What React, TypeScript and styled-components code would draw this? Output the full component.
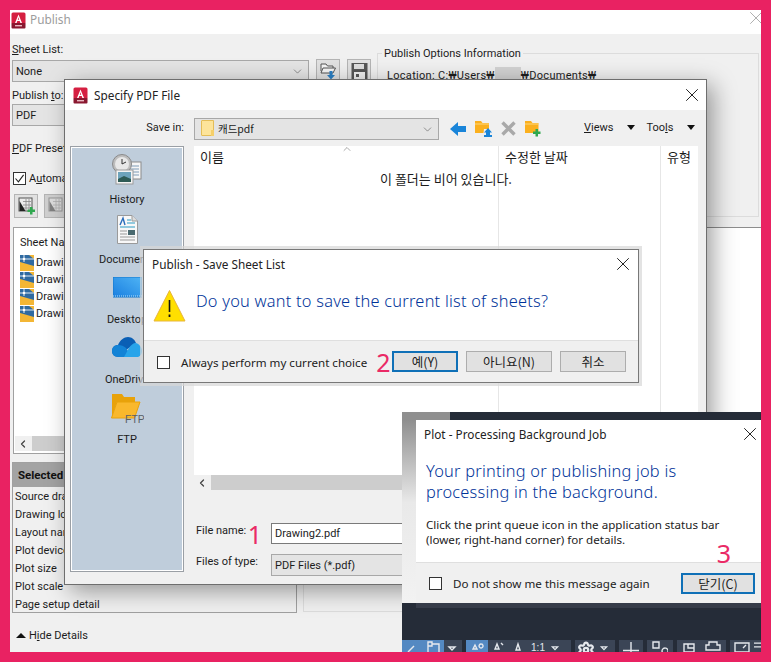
import React from 'react';
import styled, { createGlobalStyle } from 'styled-components';
import { X, ChevronDown, ChevronUp, ChevronLeft, Settings } from 'lucide-react';

const UI_FONT = `Roboto, "Noto Sans CJK KR", sans-serif`;
const DIALOG_FONT = `"Noto Sans", "Noto Sans CJK KR", sans-serif`;
const KOREAN_FONT = `"Noto Sans CJK KR", sans-serif`;

const GlobalStyle = createGlobalStyle`
  html, body {
    margin: 0;
    padding: 0;
    background: #e92262;
  }
  * {
    box-sizing: border-box;
  }
`;

const Frame = styled.div`
  width: 771px;
  height: 662px;
  padding: 10px;
  background: #e92262;
  font-family: ${UI_FONT};
  font-size: 11px;
  color: #1c1c1c;
  overflow: hidden;
`;

const Desktop = styled.div`
  position: relative;
  width: 751px;
  height: 642px;
  overflow: hidden;
  background: #f0f0f0;
`;

/* Windows sit on a free canvas */
const PublishWindow = styled.div`
  position: absolute;
  left: 0;
  top: 0;
  width: 751px;
  height: 642px;
  display: flex;
  flex-direction: column;
  background: #f0f0f0;
`;

const PublishTitle = styled.div`
  height: 24px;
  flex: none;
  background: #fff;
  display: flex;
  align-items: flex-start;
  justify-content: space-between;
  padding: 1px 0 0 1px;
  font-family: ${DIALOG_FONT};
  font-size: 11.8px;
  color: #9c9c9c;
`;

const TitleLeft = styled.div<{ $gap: number }>`
  display: flex;
  align-items: center;
  gap: ${({ $gap }) => $gap}px;
`;

const PublishName = styled.span`
  margin-bottom: 3px;
`;

const FadedClose = styled.div`
  display: flex;
  margin: -4px -6px 0 0;
  color: #a8a8a8;
`;

const TopArea = styled.div`
  display: flex;
  height: 193px;
  flex: none;
  padding: 7px 2px 0 2px;
`;

const SheetColumn = styled.div`
  width: 365px;
  flex: none;
  display: flex;
  flex-direction: column;
`;

const FieldLabel = styled.div<{ $top: number }>`
  height: 16px;
  line-height: 18px;
  margin-top: ${({ $top }) => $top}px;
  white-space: nowrap;
`;

const Combo = styled.div<{ $width?: number }>`
  height: 22px;
  width: ${({ $width }) => ($width ? `${$width}px` : '100%')};
  background: #e4e4e4;
  border: 1px solid #a8a8a8;
  display: flex;
  align-items: center;
  justify-content: space-between;
  padding: 1px 4px 0 3px;
  font-size: 11px;
  flex: none;
  svg {
    color: #444;
  }
`;

const ComboRow = styled.div<{ $top: number }>`
  display: flex;
  align-items: center;
  margin-top: ${({ $top }) => $top}px;
  gap: 7px;
`;

const SquareButton = styled.div<{ $muted?: boolean }>`
  width: 24px;
  height: 24px;
  flex: none;
  display: flex;
  align-items: center;
  justify-content: center;
  background: ${({ $muted }) => ($muted ? '#cfcfcf' : '#e1e1e1')};
  border: 1px solid #b4b4b4;
`;

const CheckRow = styled.div`
  display: flex;
  align-items: center;
  gap: 3px;
  height: 16px;
  margin-top: 14px;
  padding-left: 1px;
`;

const CheckBox = styled.span`
  width: 13px;
  height: 13px;
  flex: none;
  border: 1px solid #333;
  background: #fff;
  display: inline-flex;
  align-items: center;
  justify-content: center;
`;

const ToolRow = styled.div`
  display: flex;
  gap: 6px;
  margin-top: 8px;
  padding-left: 2px;
`;

const OptionsGroup = styled.fieldset`
  margin: 4px 0 0 0;
  flex: 1;
  height: 172px;
  border: 1px solid #dcdcdc;
  padding: 0 0 0 9px;
  min-width: 0;
  legend {
    padding: 2px 2px 0;
    margin-left: -5px;
    font-size: 11px;
    line-height: 14px;
  }
`;

const LocationLine = styled.div`
  display: flex;
  align-items: center;
  height: 16px;
  margin-top: 6px;
  white-space: nowrap;
  letter-spacing: 0.3px;
`;

const Redacted = styled.span`
  width: 26px;
  height: 16px;
  background: #d2d2d2;
  display: inline-block;
`;

const BottomArea = styled.div`
  flex: 1;
  display: flex;
  padding: 0 0 0 2px;
  min-height: 0;
`;

const DetailsColumn = styled.div`
  width: 285px;
  flex: none;
  display: flex;
  flex-direction: column;
`;

const SheetListBox = styled.div`
  height: 227px;
  margin-left: 1px;
  margin-right: 1px;
  background: #fff;
  border: 1px solid #a0a0a0;
  display: flex;
  flex-direction: column;
  padding: 6px 0 0 6px;
`;

const SheetHeader = styled.div`
  height: 16px;
  line-height: 18px;
  margin-bottom: 4px;
`;

const SheetRow = styled.div`
  display: flex;
  align-items: center;
  gap: 2px;
  height: 17px;
`;

const HScroll = styled.div<{ $button: number; $height: number }>`
  height: ${({ $height }) => $height}px;
  flex: none;
  background: linear-gradient(to right, #f0f0f0 ${({ $button }) => $button}px, #cdcdcd ${({ $button }) => $button}px);
  display: flex;
  align-items: center;
  padding-left: 2px;
  svg {
    color: #444;
  }
`;

const ListScroll = styled(HScroll)`
  margin: auto 0 2px -5px;
`;

const SelectedPanel = styled.div`
  margin-top: 8px;
  height: 151px;
  border: 1px solid #a0a0a0;
  display: flex;
  flex-direction: column;
`;

const SelectedHeader = styled.div`
  height: 24px;
  flex: none;
  background: #a3a3a3;
  font-weight: 700;
  font-size: 11.5px;
  color: #111;
  display: flex;
  align-items: center;
  padding-left: 5px;
`;

const SelectedRow = styled.div`
  height: 18px;
  line-height: 20px;
  padding-left: 2px;
  white-space: nowrap;
`;

const HideDetails = styled.div`
  display: flex;
  align-items: center;
  gap: 3px;
  margin-top: 14px;
  padding-left: 4px;
  height: 16px;
`;

const UpCaret = styled.span`
  width: 0;
  height: 0;
  border-left: 5px solid transparent;
  border-right: 5px solid transparent;
  border-bottom: 5px solid #111;
`;

const PreviewColumn = styled.div`
  flex: 1;
  margin-left: 6px;
  display: flex;
  flex-direction: column;
`;

const PreviewPane = styled.div`
  height: 355px;
  background: #fff;
  border-top: 1px solid #8d8d8d;
`;

const PreviewFoot = styled.div`
  height: 30px;
  border: 1px solid #dcdcdc;
  border-top: none;
`;

/* Specify PDF File */
const PdfDialog = styled.div`
  position: absolute;
  left: 54px;
  top: 69px;
  width: 643px;
  height: 506px;
  background: #f0f0f0;
  border: 1px solid #6e6e6e;
  box-shadow: 6px 6px 22px rgba(0, 0, 0, 0.38);
  display: flex;
  flex-direction: column;
`;

const DialogTitle = styled.div<{ $height: number; $right: number }>`
  height: ${({ $height }) => $height}px;
  flex: none;
  background: #fff;
  display: flex;
  align-items: center;
  justify-content: space-between;
  font-family: ${DIALOG_FONT};
  font-size: 11.8px;
  color: #222;
  padding: 0 ${({ $right }) => $right}px 0 8px;
  svg {
    color: #111;
  }
`;

const DialogBody = styled.div`
  flex: 1;
  display: flex;
  flex-direction: column;
  padding: 8px 8px 0 5px;
`;

const SaveRow = styled.div`
  display: flex;
  align-items: center;
  height: 21px;
`;

const SaveLabel = styled.div`
  width: 114px;
  text-align: right;
  margin-right: 10px;
  margin-bottom: 2px;
`;

const FolderName = styled.span`
  display: inline-flex;
  align-items: center;
  gap: 4px;
  font-family: ${KOREAN_FONT};
  font-size: 10.5px;
  padding-left: 3px;
  margin-top: -2px;
`;

const NavIcons = styled.div`
  display: flex;
  align-items: center;
  gap: 9px;
  margin-left: 11px;
`;

const MenuLabel = styled.span<{ $left: number }>`
  display: inline-flex;
  align-items: center;
  margin-left: ${({ $left }) => $left}px;
  margin-bottom: 2px;
  gap: 14px;
  u {
    text-decoration: underline;
  }
`;

const DownCaret = styled.span`
  width: 0;
  height: 0;
  border-left: 4px solid transparent;
  border-right: 4px solid transparent;
  border-top: 5px solid #111;
`;

const MainRow = styled.div`
  display: flex;
  margin-top: 7px;
  gap: 10px;
  height: 426px;
`;

const PlacesBar = styled.div`
  width: 114px;
  flex: none;
  background: #bfcddb;
  border: 1px solid #9a9fa5;
  outline: 1px solid #fff;
  outline-offset: -2px;
  padding-top: 2px;
`;

const PlaceItem = styled.div`
  height: 60px;
  display: flex;
  flex-direction: column;
  align-items: center;
  overflow: hidden;
`;

const PlaceIcon = styled.div`
  height: 40px;
  flex: none;
  display: flex;
  align-items: center;
  justify-content: center;
`;

const PlaceLabel = styled.div`
  height: 19px;
  line-height: 21px;
  white-space: nowrap;
`;

const FilesColumn = styled.div`
  flex: 1;
  min-width: 0;
  display: flex;
  flex-direction: column;
`;

const FileList = styled.div`
  position: relative;
  height: 329px;
  flex: none;
  background: #fff;
  display: flex;
`;

const FileColumn = styled.div<{ $width?: number }>`
  width: ${({ $width }) => ($width ? `${$width}px` : 'auto')};
  flex: ${({ $width }) => ($width ? 'none' : '1')};
  border-right: ${({ $width }) => ($width ? '1px solid #e6e6e6' : 'none')};
  font-family: ${KOREAN_FONT};
  font-size: 13px;
  padding: 3px 0 0 6px;
  line-height: 16px;
`;

const SortCaret = styled.span`
  position: absolute;
  left: 147px;
  top: -3px;
  display: flex;
  color: #555;
`;

const EmptyNote = styled.div`
  position: absolute;
  left: 0;
  right: 0;
  top: 25px;
  text-align: center;
  font-family: ${KOREAN_FONT};
  font-size: 13px;
  line-height: 16px;
`;

const FileField = styled.div<{ $top: number }>`
  display: flex;
  align-items: center;
  height: 21px;
  margin-top: ${({ $top }) => $top}px;
  padding-left: 2px;
`;

const FileLabel = styled.div`
  width: 75px;
  height: 21px;
  flex: none;
  display: flex;
  align-items: center;
  justify-content: space-between;
  padding-right: 9px;
  white-space: nowrap;
`;

const FileLabelText = styled.span`
  margin-bottom: 6px;
`;

const PinkNumber = styled.span`
  color: #ea2a66;
  font-family: "Noto Sans", sans-serif;
  font-weight: 400;
  font-size: 25px;
  line-height: 20px;
`;

const NameInput = styled.div`
  height: 21px;
  flex: 1;
  background: #fff;
  border: 1px solid #7a7a7a;
  display: flex;
  align-items: center;
  padding-left: 3px;
`;

/* Publish - Save Sheet List */
const SaveDialog = styled.div`
  position: absolute;
  left: 133px;
  top: 239px;
  width: 496px;
  height: 134px;
  background: #fff;
  border: 1px solid #787878;
  box-shadow: 0 0 0 3px rgba(215, 215, 215, 0.7);
  display: flex;
  flex-direction: column;
`;

const MessageRow = styled.div`
  flex: 1;
  display: flex;
  align-items: flex-start;
  padding: 11px 0 0 9px;
  gap: 10px;
`;

const Instruction = styled.div<{ $top: number }>`
  color: #003399;
  font-family: ${DIALOG_FONT};
  font-weight: 300;
  font-size: 16.4px;
  letter-spacing: 0.22px;
  line-height: 21px;
  padding-top: ${({ $top }) => $top}px;
`;

const DialogFooter = styled.div<{ $height: number }>`
  height: ${({ $height }) => $height}px;
  flex: none;
  background: #f0f0f0;
  border-top: 1px solid #dfdfdf;
  display: flex;
  align-items: center;
`;

const FooterCheck = styled.label<{ $drop: number }>`
  display: flex;
  align-items: center;
  font-family: ${DIALOG_FONT};
  font-size: 11.6px;
  color: #222;
  gap: 11px;
  margin-left: 13px;
  padding-top: ${({ $drop }) => $drop}px;
  white-space: nowrap;
`;

const PushButton = styled.div<{ $width: number; $primary?: boolean }>`
  width: ${({ $width }) => $width}px;
  height: 21px;
  flex: none;
  background: #e1e1e1;
  border: ${({ $primary }) => ($primary ? '2px solid #0f70b7' : '1px solid #adadad')};
  display: flex;
  align-items: center;
  justify-content: center;
  font-family: ${KOREAN_FONT};
  font-size: 12.5px;
  color: #222;
`;

const ButtonRow = styled.div`
  display: flex;
  align-items: center;
  gap: 8px;
  margin-left: auto;
  margin-right: 12px;
`;

const StepTwo = styled(PinkNumber)`
  margin-left: 9px;
`;

/* Dark application area and Plot notice */
const DarkArea = styled.div`
  position: absolute;
  left: 392px;
  top: 402px;
  width: 359px;
  height: 240px;
  background: #252c38;
  display: flex;
  flex-direction: column;
  justify-content: flex-end;
`;

const GreyEdge = styled.div`
  position: absolute;
  left: 0;
  top: 0;
  width: 48px;
  height: 8px;
  background: #8f8f8f;
`;

const GreySide = styled.div`
  position: absolute;
  left: 0;
  top: 8px;
  width: 14px;
  height: 183px;
  background: linear-gradient(to bottom, #8f8f8f, #e9e9e9 45%, #f2f2f2);
`;

const StatusBar = styled.div`
  display: flex;
  height: 12px;
  gap: 4px;
  overflow: hidden;
`;

const StatusGroup = styled.div<{ $width: number }>`
  width: ${({ $width }) => $width}px;
  flex: none;
  background: #3b4556;
  display: flex;
  align-items: flex-start;
  overflow: hidden;
`;

const StatusCell = styled.div<{ $width: number; $active?: boolean }>`
  width: ${({ $width }) => $width}px;
  height: 12px;
  flex: none;
  display: flex;
  justify-content: center;
  align-items: flex-start;
  padding-top: 1px;
  background: ${({ $active }) => ($active ? '#5489c2' : 'transparent')};
  color: #e6e9ee;
  font-size: 10px;
  line-height: 14px;
  font-family: "Liberation Sans", sans-serif;
`;

const PlotDialog = styled.div`
  position: absolute;
  left: 406px;
  top: 410px;
  width: 345px;
  height: 183px;
  background: #fff;
  box-shadow: 0 5px 0 #363c49;
  display: flex;
  flex-direction: column;
`;

const PlotBody = styled.div`
  flex: 1;
  position: relative;
  padding: 12px 0 0 10px;
`;

const PlotNote = styled.div`
  margin-top: 15px;
  font-family: ${DIALOG_FONT};
  font-size: 11.6px;
  line-height: 15px;
  color: #222;
`;

const StepThree = styled(PinkNumber)`
  position: absolute;
  right: 30px;
  bottom: -1px;
`;

const CloseButton = styled(PushButton)`
  margin-left: auto;
  margin-right: 6px;
`;

const AcadIcon = () => (
  <svg width="15" height="17" viewBox="0 0 15 17">
    <rect x="0.5" y="0.5" width="14" height="12" rx="1.5" fill="#d51f41" />
    <rect x="0.5" y="11" width="14" height="5.5" rx="1" fill="#8a1830" />
    <path d="M7.5 2.5 L11 11 H9.4 L8.7 9 H6.3 L5.6 11 H4 Z M7.5 5.3 L6.8 7.7 H8.2 Z" fill="#fff" />
    <rect x="4" y="13" width="7" height="1.4" fill="#e9b7c1" />
  </svg>
);

const CheckMark = () => (
  <svg width="11" height="11" viewBox="0 0 11 11">
    <path d="M1.5 5.5 L4.4 8.8 L9.6 1.8" fill="none" stroke="#222" strokeWidth="1.1" />
  </svg>
);

const OpenFolderDown = () => (
  <svg width="17" height="18" viewBox="0 0 17 18">
    <path d="M1 9 V2 H6 L7.5 4 H13 V6" fill="#f5f5f5" stroke="#555" />
    <path d="M1 11 L3 6 H15.5 L13 11 Z" fill="#f5f5f5" stroke="#555" />
    <path d="M9.5 9 H12.5 V13 H15 L11 17.5 L7 13 H9.5 Z" fill="#2a7fc4" />
  </svg>
);

const FloppyIcon = () => (
  <svg width="17" height="18" viewBox="0 0 17 18">
    <path d="M0.5 1 H16.5 V17 H0.5 Z" fill="#555" />
    <rect x="3" y="2" width="10" height="5" fill="#ddd" />
    <rect x="3" y="10" width="11" height="7" fill="#eee" />
    <rect x="5" y="12" width="3" height="3" fill="#555" />
  </svg>
);

const SheetAddIcon = ({ muted }: { muted?: boolean }) => (
  <svg width="17" height="19" viewBox="0 0 17 19" opacity={muted ? 0.45 : 1}>
    <rect x="1" y="1" width="13" height="13" fill="#ececec" stroke="#555" />
    <path d="M5 4.5 H13 M5 8 H13 M5 11 H13 M8 2 V13 M11 2 V13" stroke="#888" strokeWidth="0.8" />
    <path d="M1.5 4 L7.5 14 H1.5 Z" fill="#222" />
    {!muted && <path d="M12 10 H14.5 V12.5 H17 V15 H14.5 V17.5 H12 V15 H9.5 V12.5 H12 Z" fill="#2fa84f" />}
  </svg>
);

const DrawingIcon = () => (
  <svg width="14" height="16" viewBox="0 0 14 16">
    <rect width="14" height="16" fill="#f3b635" />
    <path d="M0 0 H9 L14 4 V11 L0 7 Z" fill="#2f6aa1" />
    <path d="M0 4 H14 M4 0 V7" stroke="#dfe8f2" strokeWidth="1" />
    <circle cx="4" cy="4" r="1.3" fill="#fff" />
  </svg>
);

const HistoryIcon = () => (
  <svg width="30" height="31" viewBox="0 0 30 31">
    <rect x="16" y="8" width="13" height="17" fill="#f6f6f6" stroke="#8b8b8b" />
    <path d="M18 12 H27 M18 15 H27 M18 18 H27 M18 21 H27" stroke="#7f9cb8" />
    <circle cx="10" cy="10" r="9.5" fill="#bdbdbd" stroke="#8a8a8a" />
    <circle cx="10" cy="10" r="7" fill="#e8e8e8" />
    <path d="M10 5 V10 L14 8" stroke="#333" fill="none" strokeWidth="1" />
    <rect x="4" y="16" width="17" height="14" fill="#f4f4f4" stroke="#9b9b9b" />
    <rect x="6" y="18" width="13" height="10" fill="#6da3bb" />
    <path d="M6 25 L12 22 L19 25 V28 H6 Z" fill="#2e5b55" />
  </svg>
);

const DocumentIcon = () => (
  <svg width="21" height="29" viewBox="0 0 21 29">
    <path d="M0.5 0.5 H15 L20.5 6 V28.5 H0.5 Z" fill="#f8f8f8" stroke="#9a9a9a" />
    <path d="M15 0.5 V6 H20.5" fill="#ddd" stroke="#9a9a9a" />
    <path d="M3 10 L6 3 L8 10" fill="none" stroke="#2a6dbb" strokeWidth="1.4" />
    <path d="M10 5 H14 M10 8 H18 M3 12 H18" stroke="#2a9bc4" />
    <path d="M3 16 H10 M3 19 H10 M3 22 H18 M3 25 H18" stroke="#999" />
    <rect x="11" y="15" width="7" height="5" fill="#4a6a70" />
  </svg>
);

const DesktopIcon = () => (
  <svg width="29" height="25" viewBox="0 0 29 25">
    <defs>
      <linearGradient id="screenFill" x1="0" y1="1" x2="1" y2="0">
        <stop offset="0" stopColor="#1a7fe0" />
        <stop offset="1" stopColor="#4fb4f5" />
      </linearGradient>
    </defs>
    <rect width="29" height="20" fill="url(#screenFill)" stroke="#1477c9" />
    <path d="M0 19 H29" stroke="#b9e0fb" strokeDasharray="1 1" />
  </svg>
);

const OneDriveIcon = () => (
  <svg width="30" height="24" viewBox="0 0 30 24">
    <path d="M7 20 C2 20 0 17 0 14 C0 10 3 8 6 8 C8 3 12 0 16 0 C20 0 23 3 24 6 L14 13 Z" fill="#0a5fb5" />
    <path d="M6 8 C9 8 12 9 14 11 L20 20 H7 C2 20 0 17 0 14 C0 10 3 8 6 8 Z" fill="#1383d6" />
    <path d="M24 6 C27 7 30 10 30 14 C30 18 27 20 25 20 H12 L17 11 C19 8 21 6 24 6 Z" fill="#28a4ea" />
  </svg>
);

const FtpIcon = () => (
  <svg width="33" height="32" viewBox="0 0 33 32">
    <path d="M1 24 V1 H11 L13 4 H24 V9 H6 Z" fill="#e8a20a" />
    <path d="M0.5 25 L6 9 H29 L23.5 25 Z" fill="#f9b82c" stroke="#e8a20a" />
    <text x="14" y="29.5" fontSize="10.5" fontFamily="Liberation Sans" fill="#5a5f66">FTP</text>
  </svg>
);

const WarningIcon = () => (
  <svg width="33" height="33" viewBox="0 0 33 33">
    <path d="M16.5 1.5 L32 32 H1 Z" fill="#ffdf00" stroke="#e8b53c" strokeWidth="1" />
    <path d="M16.5 11 V23" stroke="#111" strokeWidth="1.6" />
    <path d="M16.5 25.5 V28" stroke="#111" strokeWidth="1.8" />
  </svg>
);

const BackArrow = () => (
  <svg width="16" height="14" viewBox="0 0 16 14">
    <path d="M0 7 L8 0 V4 H16 V10 H8 V14 Z" fill="#1a85d9" />
  </svg>
);

const FolderUpIcon = () => (
  <svg width="17" height="17" viewBox="0 0 17 17">
    <path d="M0 1 H6 L7.5 3 H14 V13 H0 Z" fill="#fbb01e" />
    <path d="M0 4 H14" stroke="#fdd77f" />
    <path d="M9 9 H17 V17 H8 Z" fill="#f0f0f0" />
    <path d="M13 8 L17 12.5 H15 V15 H11 V12.5 H9 Z M9 15 H17 V17 H9 Z" fill="#1a85d9" />
  </svg>
);

const GreyCross = () => (
  <svg width="15" height="15" viewBox="0 0 15 15">
    <path d="M1.5 1.5 L13.5 13.5 M13.5 1.5 L1.5 13.5" stroke="#a9a9a9" strokeWidth="3.4" />
  </svg>
);

const FolderPlusIcon = () => (
  <svg width="16" height="17" viewBox="0 0 16 17">
    <path d="M0 1 H6 L7.5 3 H13.5 V13 H0 Z" fill="#fbb01e" />
    <path d="M0 4 H13.5" stroke="#fdd77f" />
    <path d="M10.5 9 H13 V11.5 H15.5 V14 H13 V16.5 H10.5 V14 H8 V11.5 H10.5 Z" fill="#2fa84f" />
  </svg>
);

const SmallFolder = () => (
  <svg width="13" height="16" viewBox="0 0 13 16">
    <path d="M0.5 1 Q0.5 0.5 1 0.5 H12.5 V15.5 H1 Q0.5 15.5 0.5 15 Z" fill="#fde49a" stroke="#e4bd57" />
    <rect x="10" y="10" width="3" height="6" fill="#f5cf6a" />
  </svg>
);

const StatusGlyph = ({ d }: { d: string }) => (
  <svg width="16" height="11" viewBox="0 0 16 11">
    <path d={d} fill="none" stroke="#e6e9ee" strokeWidth="1.4" />
  </svg>
);

const ARROW_GLYPH = 'M5 6 H11 L8 9 Z';

const sheets = ['Drawi', 'Drawi', 'Drawi', 'Drawi'];
const selectedRows = ['Source dra', 'Drawing lo', 'Layout nar', 'Plot device', 'Plot size', 'Plot scale', 'Page setup detail'];

export default function App() {
  return (
    <Frame>
      <GlobalStyle />
      <Desktop>
        <PublishWindow>
          <PublishTitle>
            <TitleLeft $gap={4}>
              <AcadIcon />
              <PublishName>Publish</PublishName>
            </TitleLeft>
            <FadedClose>
              <X size={22} strokeWidth={1} />
            </FadedClose>
          </PublishTitle>

          <TopArea>
            <SheetColumn>
              <FieldLabel $top={0}><u>S</u>heet List:</FieldLabel>
              <ComboRow $top={2}>
                <Combo $width={297}>
                  None
                  <ChevronDown size={13} strokeWidth={1} />
                </Combo>
                <SquareButton><OpenFolderDown /></SquareButton>
                <SquareButton><FloppyIcon /></SquareButton>
              </ComboRow>
              <FieldLabel $top={4}>Publish <u>t</u>o:</FieldLabel>
              <ComboRow $top={1}>
                <Combo $width={297}>PDF</Combo>
              </ComboRow>
              <FieldLabel $top={14}><u>P</u>DF Preset</FieldLabel>
              <CheckRow>
                <CheckBox><CheckMark /></CheckBox>
                <span>A<u>u</u>tomatic</span>
              </CheckRow>
              <ToolRow>
                <SquareButton><SheetAddIcon /></SquareButton>
                <SquareButton $muted><SheetAddIcon muted /></SquareButton>
              </ToolRow>
            </SheetColumn>
            <OptionsGroup>
              <legend>Publish Options Information</legend>
              <LocationLine>
                Location: C:₩Users₩
                <Redacted />
                ₩Documents₩
              </LocationLine>
            </OptionsGroup>
          </TopArea>

          <BottomArea>
            <DetailsColumn>
              <SheetListBox>
                <SheetHeader>Sheet Name</SheetHeader>
                {sheets.map((name, i) => (
                  <SheetRow key={i}>
                    <DrawingIcon />
                    {name}
                  </SheetRow>
                ))}
                <ListScroll $button={17} $height={15}>
                  <ChevronLeft size={12} strokeWidth={2.5} />
                </ListScroll>
              </SheetListBox>
              <SelectedPanel>
                <SelectedHeader>Selected</SelectedHeader>
                {selectedRows.map((row) => (
                  <SelectedRow key={row}>{row}</SelectedRow>
                ))}
              </SelectedPanel>
              <HideDetails>
                <UpCaret />
                <span>H<u>i</u>de Details</span>
              </HideDetails>
            </DetailsColumn>
            <PreviewColumn>
              <PreviewPane />
              <PreviewFoot />
            </PreviewColumn>
          </BottomArea>
        </PublishWindow>

        <PdfDialog>
          <DialogTitle $height={30} $right={3}>
            <TitleLeft $gap={6}>
              <AcadIcon />
              <span>Specify PDF File</span>
            </TitleLeft>
            <X size={22} strokeWidth={1} />
          </DialogTitle>
          <DialogBody>
            <SaveRow>
              <SaveLabel>Save in:</SaveLabel>
              <Combo $width={245}>
                <FolderName>
                  <SmallFolder />
                  캐드pdf
                </FolderName>
                <ChevronDown size={13} strokeWidth={1} />
              </Combo>
              <NavIcons>
                <BackArrow />
                <FolderUpIcon />
                <GreyCross />
                <FolderPlusIcon />
              </NavIcons>
              <MenuLabel $left={43}>
                <span><u>V</u>iews</span>
                <DownCaret />
              </MenuLabel>
              <MenuLabel $left={11}>
                <span>Too<u>l</u>s</span>
                <DownCaret />
              </MenuLabel>
            </SaveRow>
            <MainRow>
              <PlacesBar>
                <PlaceItem>
                  <PlaceIcon><HistoryIcon /></PlaceIcon>
                  <PlaceLabel>History</PlaceLabel>
                </PlaceItem>
                <PlaceItem>
                  <PlaceIcon><DocumentIcon /></PlaceIcon>
                  <PlaceLabel>Documents</PlaceLabel>
                </PlaceItem>
                <PlaceItem>
                  <PlaceIcon><DesktopIcon /></PlaceIcon>
                  <PlaceLabel>Desktop</PlaceLabel>
                </PlaceItem>
                <PlaceItem>
                  <PlaceIcon><OneDriveIcon /></PlaceIcon>
                  <PlaceLabel>OneDrive</PlaceLabel>
                </PlaceItem>
                <PlaceItem>
                  <PlaceIcon><FtpIcon /></PlaceIcon>
                  <PlaceLabel>FTP</PlaceLabel>
                </PlaceItem>
              </PlacesBar>
              <FilesColumn>
                <FileList>
                  <FileColumn $width={305}>이름</FileColumn>
                  <FileColumn $width={162}>수정한 날짜</FileColumn>
                  <FileColumn>유형</FileColumn>
                  <SortCaret><ChevronUp size={12} strokeWidth={1} /></SortCaret>
                  <EmptyNote>이 폴더는 비어 있습니다.</EmptyNote>
                </FileList>
                <HScroll $button={17} $height={15}>
                  <ChevronLeft size={12} strokeWidth={2.5} />
                </HScroll>
                <FileField $top={33}>
                  <FileLabel>
                    <FileLabelText>File name:</FileLabelText>
                    <PinkNumber>1</PinkNumber>
                  </FileLabel>
                  <NameInput>Drawing2.pdf</NameInput>
                </FileField>
                <FileField $top={10}>
                  <FileLabel>
                    <FileLabelText>Files of type:</FileLabelText>
                  </FileLabel>
                  <Combo>PDF Files (*.pdf)</Combo>
                </FileField>
              </FilesColumn>
            </MainRow>
          </DialogBody>
        </PdfDialog>

        <SaveDialog>
          <DialogTitle $height={28} $right={4}>
            <span>Publish - Save Sheet List</span>
            <X size={22} strokeWidth={1} />
          </DialogTitle>
          <MessageRow>
            <WarningIcon />
            <Instruction $top={1}>Do you want to save the current list of sheets?</Instruction>
          </MessageRow>
          <DialogFooter $height={42}>
            <FooterCheck $drop={2}>
              <CheckBox />
              Always perform my current choice
            </FooterCheck>
            <StepTwo>2</StepTwo>
            <ButtonRow>
              <PushButton $width={66} $primary>예(Y)</PushButton>
              <PushButton $width={86}>아니요(N)</PushButton>
              <PushButton $width={66}>취소</PushButton>
            </ButtonRow>
          </DialogFooter>
        </SaveDialog>

        <DarkArea>
          <GreyEdge />
          <GreySide />
          <StatusBar>
            <StatusGroup $width={60}>
              <StatusCell $width={20} $active><StatusGlyph d="M4 11 L10 5" /></StatusCell>
              <StatusCell $width={22} $active><StatusGlyph d="M3 1 H7 V5 H3 Z M7 3 H14 V11 M3 5 V11" /></StatusCell>
              <StatusCell $width={16}><StatusGlyph d={ARROW_GLYPH} /></StatusCell>
            </StatusGroup>
            <StatusGroup $width={105}>
              <StatusCell $width={22} $active><StatusGlyph d="M6 4 L4 8 H8 Z M12 3 A2 2 0 1 0 12.1 3" /></StatusCell>
              <StatusCell $width={20}><StatusGlyph d="M7 3 L5 8 H9 Z M11 2 L13 4" /></StatusCell>
              <StatusCell $width={20}><StatusGlyph d="M8 3 L6 9 H10 Z" /></StatusCell>
              <StatusCell $width={20}>1:1</StatusCell>
              <StatusCell $width={14}><StatusGlyph d={ARROW_GLYPH} /></StatusCell>
            </StatusGroup>
            <StatusGroup $width={40}>
              <StatusCell $width={22}><Settings size={18} strokeWidth={3} /></StatusCell>
              <StatusCell $width={14}><StatusGlyph d={ARROW_GLYPH} /></StatusCell>
            </StatusGroup>
            <StatusGroup $width={24}>
              <StatusCell $width={24}><StatusGlyph d="M8 1 V11 M0 9.5 H16" /></StatusCell>
            </StatusGroup>
            <StatusGroup $width={26}>
              <StatusCell $width={26}><StatusGlyph d="M1 1 H7 V7 H1 Z M13 7 A3 3 0 1 0 13.1 7" /></StatusCell>
            </StatusGroup>
            <StatusGroup $width={49}>
              <StatusCell $width={24}><StatusGlyph d="M3 3 H13 V11 H3 Z M7 3 V7 H13" /></StatusCell>
              <StatusCell $width={24}><StatusGlyph d="M4 1 H12 V4 H15 V9 H1 V4 H4 Z" /></StatusCell>
            </StatusGroup>
            <StatusGroup $width={36}>
              <StatusCell $width={24}><StatusGlyph d="M1 2 H15 V11 H1 Z M9 7 L12 4" /></StatusCell>
              <StatusCell $width={12}><StatusGlyph d="M0 1 H10 M0 6 H10" /></StatusCell>
            </StatusGroup>
          </StatusBar>
        </DarkArea>

        <PlotDialog>
          <DialogTitle $height={28} $right={0}>
            <span>Plot - Processing Background Job</span>
            <X size={22} strokeWidth={1} />
          </DialogTitle>
          <PlotBody>
            <Instruction $top={0}>
              Your printing or publishing job is<br />
              processing in the background.
            </Instruction>
            <PlotNote>
              Click the print queue icon in the application status bar<br />
              (lower, right-hand corner) for details.
            </PlotNote>
            <StepThree>3</StepThree>
          </PlotBody>
          <DialogFooter $height={41}>
            <FooterCheck $drop={0}>
              <CheckBox />
              Do not show me this message again
            </FooterCheck>
            <CloseButton $width={74} $primary>닫기(C)</CloseButton>
          </DialogFooter>
        </PlotDialog>
      </Desktop>
    </Frame>
  );
}
